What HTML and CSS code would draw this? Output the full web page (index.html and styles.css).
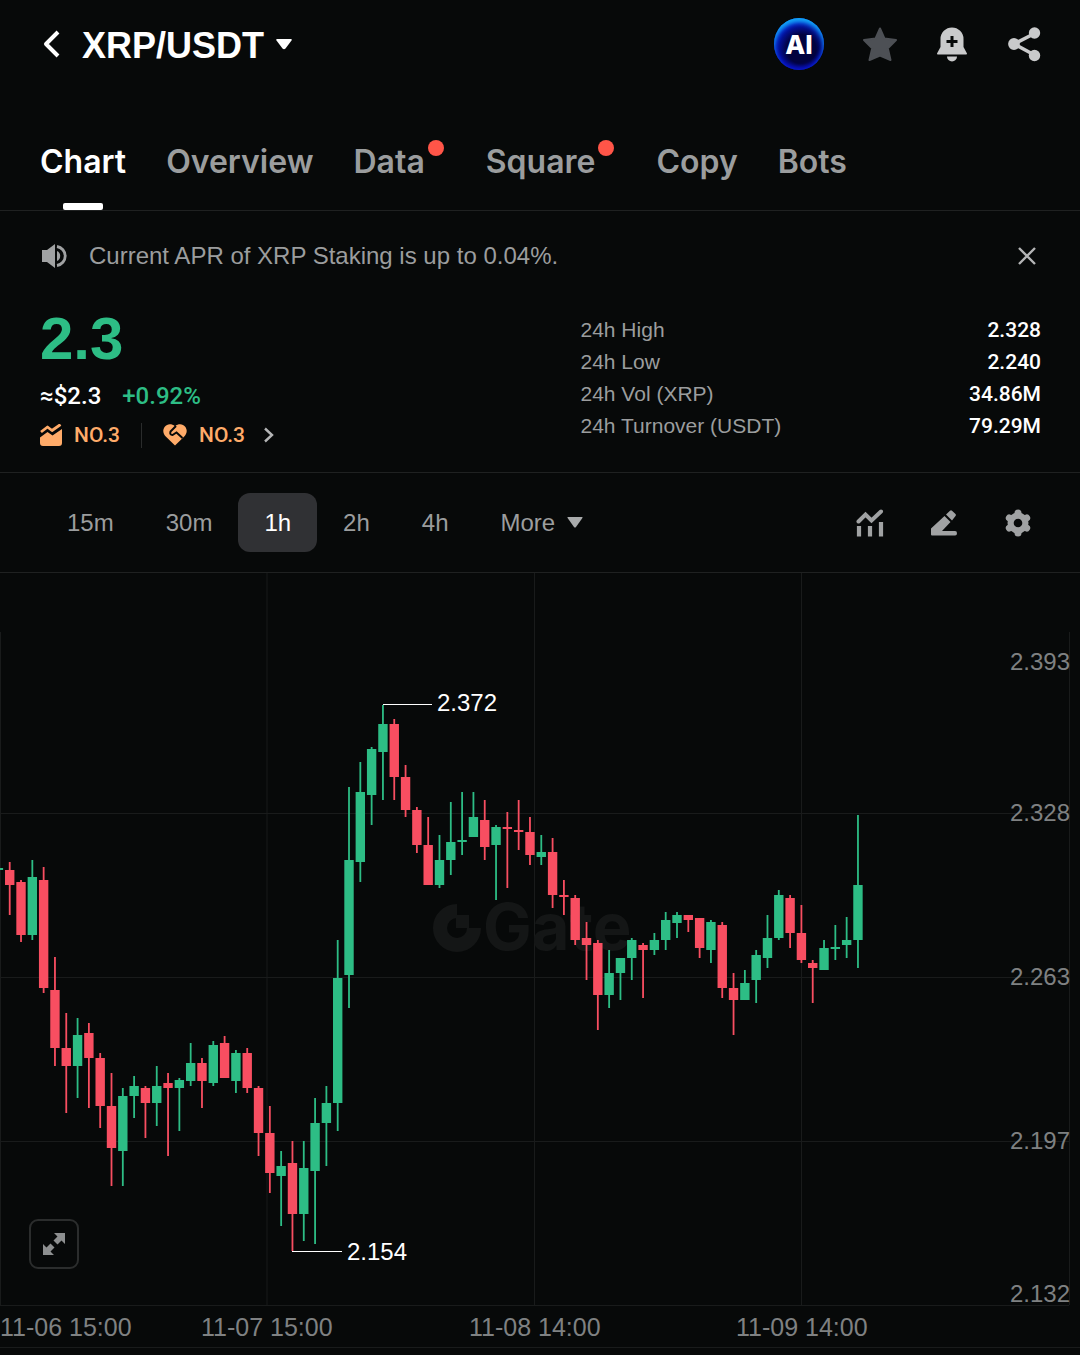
FILE: index.html
```html
<!DOCTYPE html>
<html lang="en">
  <head>
    <meta charset="utf-8" />
    <title>XRP/USDT</title>
    <meta name="viewport" content="width=device-width, initial-scale=1.0" />
    <link rel="stylesheet" href="styles.css" />
  </head>
  <body>
    <header class="topbar">
      <button class="icon-button" type="button" aria-label="Back">
        <svg width="24" height="32" viewBox="0 0 24 32">
          <path d="M19 4 7 16l12 12" fill="none" stroke="#fff" stroke-width="4" stroke-linejoin="round" />
        </svg>
      </button>
      <button class="pair" type="button">
        <h1>XRP/USDT</h1>
        <svg width="18" height="12" viewBox="0 0 18 12">
          <path d="M2 1h14q1.500 0 .5 1.500l-6 8q-1.500 1.500-3 0l-6-8Q.5 1 2 1z" fill="#fff" />
        </svg>
      </button>
      <div class="topbar-actions">
        <button class="ai-button" type="button">AI</button>
        <button class="icon-button" type="button" aria-label="Favorite">
          <svg width="36" height="36" viewBox="0 0 36 36">
            <path d="M18 2.500 22.400 12.500 34 14 25.800 22.200 28.500 34 18 29.500 7.500 34 10.200 22.200 2 14 13.600 12.500z" fill="#4d5055" stroke="#4d5055" stroke-width="2" stroke-linejoin="round" />
          </svg>
        </button>
        <button class="icon-button" type="button" aria-label="Price alert">
          <svg width="36" height="36" viewBox="0 0 36 36">
            <path d="M6.500 13a11.500 11.500 0 0 1 23 0v8l3.500 6.500q.3 1-1 1H4q-1.300 0-1-1L6.500 21z" fill="#c9cacb" />
            <path d="M13 30.500h10a5 5 0 0 1-10 0z" fill="#c9cacb" />
            <path d="M18 10v11M12.500 15.500h11" stroke="#070909" stroke-width="3" />
          </svg>
        </button>
        <button class="icon-button" type="button" aria-label="Share">
          <svg width="36" height="36" viewBox="0 0 36 36">
            <path d="M28.500 7.500 8 18l20.500 11" fill="none" stroke="#c9cacb" stroke-width="3.600" />
            <circle cx="28.500" cy="7" r="5.700" fill="#c9cacb" />
            <circle cx="8" cy="18" r="5.900" fill="#c9cacb" />
            <circle cx="28.500" cy="29.500" r="5.700" fill="#c9cacb" />
          </svg>
        </button>
      </div>
    </header>

    <nav class="tabs">
      <a class="tab active" href="#chart">Chart</a>
      <a class="tab" href="#overview">Overview</a>
      <a class="tab has-dot" href="#data">Data</a>
      <a class="tab has-dot" href="#square">Square</a>
      <a class="tab" href="#copy">Copy</a>
      <a class="tab" href="#bots">Bots</a>
    </nav>

    <div class="notice">
      <svg width="26" height="24" viewBox="0 0 26 24">
        <path d="M0 6h5l8-6v24l-8-6H0z" fill="#a0a2a3" />
        <path d="M15 7a5.500 5.500 0 0 1 0 10z" fill="#a0a2a3" />
        <path d="M15 2.500a9.600 9.600 0 0 1 0 19" fill="none" stroke="#a0a2a3" stroke-width="2.800" />
      </svg>
      <p>Current APR of XRP Staking is up to 0.04%.</p>
      <button class="icon-button" type="button" aria-label="Close">
        <svg width="18" height="18" viewBox="0 0 18 18">
          <path d="M1 1l16 16M17 1 1 17" stroke="#b4b5b6" stroke-width="2.400" />
        </svg>
      </button>
    </div>

    <section class="summary">
      <div class="quote">
        <div class="last-price">2.3</div>
        <div class="change">
          <span>≈$2.3</span>
          <span class="up">+0.92%</span>
        </div>
        <a class="ranks" href="#ranks">
          <svg width="22" height="22" viewBox="0 0 22 22">
            <path d="M1 8 7.500 3 12 6.500 20.500.5" fill="none" stroke="#ffab69" stroke-width="2.800" stroke-linejoin="round" />
            <path d="M0 13.500 7.500 8l5 3.500L22 5v14q0 3-3 3H3q-3 0-3-3z" fill="#ffab69" />
          </svg>
          <span>NO.3</span>
          <i class="divider"></i>
          <svg width="24" height="22" viewBox="0 0 24 22">
            <path d="M12 2.200C8.500-.8 4-.3 1.800 2.700-.8 6.200.2 10 3 12.800L12 21.500l9-8.700c2.800-2.800 3.800-6.600 1.200-10.100C20-.3 15.500-.8 12 2.200z" fill="#ffab69" />
            <path d="M13 2 7.500 7.500q-1 3.500 2 3.500l4-2.500 6 5.500" fill="none" stroke="#070909" stroke-width="2" />
          </svg>
          <span>NO.3</span>
          <svg class="chevron" width="10" height="16" viewBox="0 0 10 16">
            <path d="M1 1.500 8 8l-7 6.500" fill="none" stroke="#b4b5b6" stroke-width="2.400" />
          </svg>
        </a>
      </div>
      <dl class="stats">
        <div><dt>24h High</dt><dd>2.328</dd></div>
        <div><dt>24h Low</dt><dd>2.240</dd></div>
        <div><dt>24h Vol (XRP)</dt><dd>34.86M</dd></div>
        <div><dt>24h Turnover (USDT)</dt><dd>79.29M</dd></div>
      </dl>
    </section>

    <div class="toolbar">
      <div class="intervals">
        <button type="button">15m</button>
        <button type="button">30m</button>
        <button class="selected" type="button">1h</button>
        <button type="button">2h</button>
        <button type="button">4h</button>
        <button type="button">
          More
          <svg width="16" height="11" viewBox="0 0 16 11">
            <path d="M1 0h14q1 0 .4 1L9 10q-1 1-2 0L.6 1Q0 0 1 0z" fill="#a9abac" />
          </svg>
        </button>
      </div>
      <div class="tools">
        <button class="icon-button" type="button" aria-label="Indicators">
          <svg width="28" height="28" viewBox="0 0 28 28">
            <path d="M2.500 12.500 9.500 5.500l6 6L25 2.500" fill="none" stroke="#a0a2a3" stroke-width="4" stroke-linecap="round" />
            <path d="M3 17v10.500M14 17v10.500M25 13v14.500" stroke="#a0a2a3" stroke-width="4.200" />
          </svg>
        </button>
        <button class="icon-button" type="button" aria-label="Draw">
          <svg width="28" height="28" viewBox="0 0 28 28">
            <path d="M1 19.500 14.500 7l6 6L12 22h13q2 0 2 2.300T25 26.500H2q-1 0-1-1z" fill="#a0a2a3" />
            <path d="M16 5.500 20 1.700q1-.9 2 0L25.500 5q1 1 0 2L22 11.500z" fill="#a0a2a3" />
          </svg>
        </button>
        <button class="icon-button" type="button" aria-label="Settings">
          <svg width="28" height="28" viewBox="0 0 28 28">
            <circle cx="14" cy="14" r="10.500" fill="#a0a2a3" />
            <path d="M14 4v20M5.300 9l17.400 10M5.300 19 22.700 9" stroke="#a0a2a3" stroke-width="7" stroke-linecap="round" />
            <circle cx="14" cy="14" r="4.300" fill="#070909" />
          </svg>
        </button>
      </div>
    </div>

    <main class="chart">
      <svg id="candles" class="chart-canvas" viewBox="0 573 1080 782" role="img" aria-label="XRP/USDT 1h candles">
        <g class="grid">
          <path d="M.5 632V1305M267 573V1305M534.500 573V1305M801.500 573V1305M1069.500 632V1305" />
          <path d="M0 813.500H1069M0 977.500H1069M0 1141.500H1069M0 1305.500H1069M0 1347.500H1080" />
        </g>
        <g class="watermark">
          <path d="M457 911a17 17 0 1 0 17 17" />
          <rect x="456" y="915" width="13" height="13" />
          <text x="483" y="950">Gate</text>
        </g>
        <g id="series"></g>
        <g class="marker">
          <path d="M383 704.500H432M292 1251.500H342" />
          <text x="437" y="711">2.372</text>
          <text x="347" y="1260">2.154</text>
        </g>
        <g class="axis axis-price">
          <text x="1070" y="670">2.393</text>
          <text x="1070" y="821">2.328</text>
          <text x="1070" y="985">2.263</text>
          <text x="1070" y="1149">2.197</text>
          <text x="1070" y="1302">2.132</text>
        </g>
        <g class="axis axis-time">
          <text x="0" y="1336">11-06 15:00</text>
          <text x="201" y="1336">11-07 15:00</text>
          <text x="469" y="1336">11-08 14:00</text>
          <text x="736" y="1336">11-09 14:00</text>
        </g>
      </svg>
      <button class="expand" type="button" aria-label="Full screen">
        <svg width="24" height="24" viewBox="0 0 24 24">
          <path d="M12 1h11v11l-3.500-3.500-4 4-4-4 4-4z" fill="#8d8f90" />
          <path d="M12 23H1V12l3.500 3.500 4-4 4 4-4 4z" fill="#8d8f90" />
        </svg>
      </button>
    </main>

    <script src="chart.js"></script>
  </body>
</html>
```

FILE: styles.css
```css
:root {
  --bg: #070909;
  --line: #1f2121;
  --muted: #9b9d9e;
  --up: #2dbd85;
  --down: #f84e61;
  --orange: #ffab69;
}

* {
  box-sizing: border-box;
}

body {
  margin: 0;
  background: var(--bg);
  color: #fff;
  font-family: "Liberation Sans", Arial, sans-serif;
  font-size: 24px;
}

button {
  padding: 0;
  border: 0;
  background: none;
  color: inherit;
  font: inherit;
  cursor: pointer;
}

a {
  color: inherit;
  text-decoration: none;
}

svg {
  display: block;
  flex: none;
}

.topbar {
  display: flex;
  align-items: center;
  height: 88px;
  padding: 0 38px 0 39px;
}

.pair {
  display: flex;
  align-items: center;
  gap: 11px;
  margin-left: 19px;
}

.pair h1 {
  margin: 0;
  padding-top: 3px;
  font-size: 36px;
  line-height: 40px;
}

.topbar-actions {
  display: flex;
  align-items: center;
  gap: 36px;
  margin-left: auto;
}

.ai-button {
  width: 50px;
  height: 52px;
  margin-right: 2px;
  border-radius: 50%;
  background: radial-gradient(circle at 55% 60%, #02033f 35%, #0416b8 62%, #0a50f0 75%);
  box-shadow: inset 0 4px 5px #13a9f5, inset 0 -3px 4px #0a10c8;
  font-family: Inter, sans-serif;
  font-size: 26px;
  font-weight: 800;
}

.tabs {
  display: flex;
  gap: 40px;
  height: 123px;
  padding: 0 40px;
  border-bottom: 1px solid var(--line);
}

.tab {
  position: relative;
  padding-top: 54px;
  color: var(--muted);
  font-family: Inter, sans-serif;
  font-size: 32px;
  font-weight: 600;
  line-height: 40px;
}

.tab.active {
  color: #fff;
}

.tab.active::after {
  content: "";
  position: absolute;
  bottom: 0;
  left: 50%;
  width: 40px;
  height: 7px;
  margin-left: -20px;
  border-radius: 2px;
  background: #fff;
}

.tab.has-dot {
  padding-right: 21px;
}

.tab.has-dot::after {
  content: "";
  position: absolute;
  top: 52px;
  right: 2px;
  width: 16px;
  height: 16px;
  border-radius: 50%;
  background: #ff5548;
}

.notice {
  display: flex;
  align-items: center;
  gap: 21px;
  height: 90px;
  padding: 0 44px 0 42px;
  color: var(--muted);
}

.notice p {
  flex: 1;
  margin: 0;
}

.summary {
  display: grid;
  grid-template-columns: 1fr 1fr;
  padding: 6px 39px 16px 40px;
  border-bottom: 1px solid var(--line);
}

.last-price {
  color: var(--up);
  font-size: 60px;
  font-weight: bold;
  line-height: 64px;
}

.change {
  display: flex;
  gap: 21px;
  margin-top: 7px;
  font-family: Roboto, sans-serif;
  font-weight: 500;
  line-height: 36px;
}

.up {
  color: var(--up);
}

.ranks {
  display: inline-flex;
  align-items: center;
  gap: 12px;
  height: 42px;
  color: var(--orange);
  font-family: Roboto, sans-serif;
  font-size: 21px;
  font-weight: 500;
}

.divider {
  width: 1px;
  height: 25px;
  margin: 0 9px;
  background: #2a2c2c;
}

.chevron {
  margin-left: 7px;
}

.stats {
  margin: 7px 0 0 40px;
  font-size: 21px;
  line-height: 32px;
}

.stats div {
  display: flex;
  justify-content: space-between;
}

.stats dt {
  color: var(--muted);
}

.stats dd {
  margin: 0;
  font-family: Roboto, sans-serif;
  font-weight: 500;
}

.toolbar {
  display: flex;
  align-items: center;
  justify-content: space-between;
  height: 100px;
  padding: 0 48px 0 41px;
  border-bottom: 1px solid var(--line);
  color: var(--muted);
}

.intervals {
  display: flex;
}

.intervals button {
  display: flex;
  align-items: center;
  gap: 12px;
  height: 59px;
  padding: 0 26px;
  border-radius: 12px;
}

.intervals .selected {
  background: #303134;
  color: #fff;
}

.tools {
  display: flex;
  gap: 46px;
}

.chart {
  position: relative;
}

.chart-canvas {
  width: 100%;
  height: auto;
}

.grid path {
  fill: none;
  stroke: #191b1b;
}

.watermark {
  fill: #141616;
}

.watermark path {
  fill: none;
  stroke: #141616;
  stroke-width: 14px;
}

.watermark text {
  font-family: Inter, sans-serif;
  font-size: 65px;
  font-weight: 700;
}

.candle {
  fill: var(--down);
}

.candle.rise {
  fill: var(--up);
}

.marker path {
  stroke: #fff;
}

.marker text {
  fill: #fff;
}

.axis text {
  fill: #7f8182;
}

.axis-price text {
  text-anchor: end;
}

.axis-time text {
  font-size: 25px;
}

.expand {
  display: grid;
  place-items: center;
  position: absolute;
  left: 29px;
  bottom: 86px;
  width: 50px;
  height: 50px;
  border: 2px solid #2b2d2d;
  border-radius: 9px;
}
```

FILE: chart.js
```js
// direction, high, body top, body bottom, low
const candles = [
  ["u", 868, 868, 870, 870],
  ["d", 862, 870, 885, 915],
  ["d", 880, 882, 935, 942],
  ["u", 860, 877, 935, 940],
  ["d", 867, 880, 988, 993],
  ["d", 957, 990, 1048, 1066],
  ["d", 1013, 1048, 1066, 1113],
  ["u", 1018, 1035, 1066, 1098],
  ["d", 1023, 1033, 1058, 1108],
  ["d", 1053, 1058, 1106, 1128],
  ["d", 1073, 1106, 1148, 1186],
  ["u", 1088, 1096, 1151, 1186],
  ["u", 1076, 1086, 1096, 1118],
  ["d", 1086, 1088, 1103, 1138],
  ["u", 1066, 1086, 1103, 1126],
  ["d", 1073, 1083, 1088, 1156],
  ["u", 1078, 1080, 1088, 1131],
  ["u", 1043, 1063, 1081, 1086],
  ["d", 1058, 1063, 1081, 1108],
  ["u", 1041, 1045, 1083, 1086],
  ["d", 1036, 1043, 1078, 1078],
  ["u", 1050, 1053, 1081, 1093],
  ["d", 1048, 1053, 1088, 1093],
  ["d", 1086, 1088, 1133, 1156],
  ["d", 1106, 1133, 1173, 1193],
  ["u", 1151, 1166, 1176, 1226],
  ["d", 1141, 1163, 1214, 1251],
  ["u", 1141, 1168, 1214, 1241],
  ["u", 1098, 1123, 1171, 1244],
  ["u", 1086, 1103, 1123, 1166],
  ["u", 940, 978, 1103, 1131],
  ["u", 787, 860, 975, 1008],
  ["u", 762, 792, 862, 882],
  ["u", 747, 749, 795, 825],
  ["u", 705, 724, 752, 800],
  ["d", 719, 724, 777, 800],
  ["d", 765, 777, 810, 817],
  ["d", 807, 810, 845, 853],
  ["d", 817, 845, 885, 885],
  ["u", 835, 860, 885, 888],
  ["u", 802, 842, 860, 875],
  ["u", 792, 840, 842, 855],
  ["u", 792, 817, 837, 837],
  ["d", 800, 820, 847, 860],
  ["u", 825, 827, 845, 900],
  ["d", 812, 827, 829, 888],
  ["d", 800, 830, 832, 850],
  ["d", 817, 832, 855, 865],
  ["u", 835, 852, 857, 865],
  ["d", 838, 852, 895, 908],
  ["d", 880, 895, 897, 915],
  ["d", 895, 898, 940, 945],
  ["d", 922, 938, 945, 980],
  ["d", 940, 943, 995, 1030],
  ["u", 950, 973, 995, 1008],
  ["u", 958, 958, 973, 1000],
  ["u", 938, 940, 958, 980],
  ["d", 943, 945, 950, 998],
  ["u", 933, 940, 950, 955],
  ["u", 912, 920, 940, 950],
  ["u", 912, 915, 923, 938],
  ["d", 915, 915, 920, 932],
  ["d", 918, 918, 948, 958],
  ["u", 920, 922, 950, 963],
  ["d", 922, 925, 988, 998],
  ["d", 973, 988, 1000, 1035],
  ["u", 970, 983, 1000, 1000],
  ["u", 950, 955, 980, 1003],
  ["u", 915, 938, 958, 968],
  ["u", 890, 895, 938, 940],
  ["d", 895, 898, 933, 948],
  ["d", 905, 933, 960, 963],
  ["d", 960, 963, 968, 1003],
  ["u", 940, 948, 970, 970],
  ["u", 925, 947, 949, 960],
  ["u", 917, 940, 945, 958],
  ["u", 815, 885, 940, 968],
];

const first = -1.6;
const step = 11.31;
const series = document.getElementById("series");

function addRect(x, y, width, height, className) {
  const rect = document.createElementNS("http://www.w3.org/2000/svg", "rect");
  rect.setAttribute("x", x.toFixed(2));
  rect.setAttribute("y", y);
  rect.setAttribute("width", width);
  rect.setAttribute("height", height);
  rect.setAttribute("class", className);
  series.appendChild(rect);
}

candles.forEach(([direction, high, top, bottom, low], i) => {
  const x = first + i * step;
  const className = direction === "u" ? "candle rise" : "candle";
  addRect(x - 0.9, high, 1.8, low - high, className);
  addRect(x - 4.7, top, 9.4, bottom - top, className);
});
```
